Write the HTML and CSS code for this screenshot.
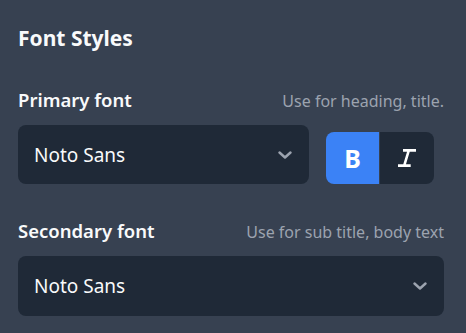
FILE: index.html
```html
<!DOCTYPE html>
<html lang="en">
  <head>
    <meta charset="UTF-8" />
    <meta name="viewport" content="width=device-width, initial-scale=1.0" />
    <title>Font Styles</title>
    <link rel="stylesheet" href="styles.css">
  </head>
  <body>
    <section class="panel">
      <h2 class="panel-title">Font Styles</h2>

      <div class="field">
        <div class="field-head">
          <span class="field-label">Primary font</span>
          <span class="field-hint">Use for heading, title.</span>
        </div>
        <div class="field-row">
          <div class="select">
            <span>Noto Sans</span>
            <svg class="chevron" width="14" height="8" viewBox="0 0 14 8" fill="none" stroke="currentColor" stroke-width="2.4" stroke-linecap="round" stroke-linejoin="round">
              <path d="M1.5 1.5 7 6.5 12.5 1.5" />
            </svg>
          </div>
          <div class="toggles">
            <button class="toggle active">B</button>
            <button class="toggle">
              <svg width="18" height="18" viewBox="0 0 18 18" fill="none" stroke="currentColor" stroke-width="2.6">
                <path d="M5 1.4H18M0 16.6H12.7M10.8 1.4 6.2 16.6" />
              </svg>
            </button>
          </div>
        </div>
      </div>

      <div class="field">
        <div class="field-head">
          <span class="field-label">Secondary font</span>
          <span class="field-hint">Use for sub title, body text</span>
        </div>
        <div class="field-row">
          <div class="select tall">
            <span>Noto Sans</span>
            <svg class="chevron" width="14" height="8" viewBox="0 0 14 8" fill="none" stroke="currentColor" stroke-width="2.4" stroke-linecap="round" stroke-linejoin="round">
              <path d="M1.5 1.5 7 6.5 12.5 1.5" />
            </svg>
          </div>
        </div>
      </div>
    </section>
  </body>
</html>
```

FILE: styles.css
```css
*,
*::before,
*::after {
  box-sizing: border-box;
}
body {
  margin: 0;
  background-color: #374151;
  font-family: "Noto Sans", sans-serif;
  color: #f9fafb;
}
button {
  border: 0;
  cursor: pointer;
  font-family: inherit;
  color: #fff;
}
.panel {
  padding: 24px 22px 0 18px;
}
.panel-title {
  margin: 0;
  font-size: 21px;
  line-height: 28px;
  font-weight: 700;
}
.field {
  margin-top: 36px;

  & + .field {
    margin-top: 35px;
  }
}
.field-head {
  display: flex;
  justify-content: space-between;
  align-items: baseline;
  height: 24px;
  line-height: 24px;
}
.field-label {
  font-size: 18.5px;
  font-weight: 600;
}
.field-hint {
  font-size: 16px;
  color: #9ca3af;
}
.field-row {
  display: flex;
  align-items: flex-end;
  gap: 17px;
  margin-top: 13px;
}
.select {
  flex: 1;
  height: 59px;
  display: flex;
  align-items: center;
  justify-content: space-between;
  padding: 0 17px 0 16px;
  background-color: #1f2937;
  border-radius: 8px;
  font-size: 19px;

  &.tall {
    height: 60px;
  }
  & .chevron {
    color: #9ca3af;
  }
}
.toggles {
  display: flex;
  gap: 1px;
  margin-right: 10px;
  border-radius: 8px;
  overflow: hidden;
}
.toggle {
  width: 53px;
  height: 52px;
  display: flex;
  align-items: center;
  justify-content: center;
  background-color: #1f2937;
  font-size: 25px;
  font-weight: 700;

  & + .toggle {
    width: 54px;
  }
  &.active {
    background-color: #3b82f6;
  }
}
```
